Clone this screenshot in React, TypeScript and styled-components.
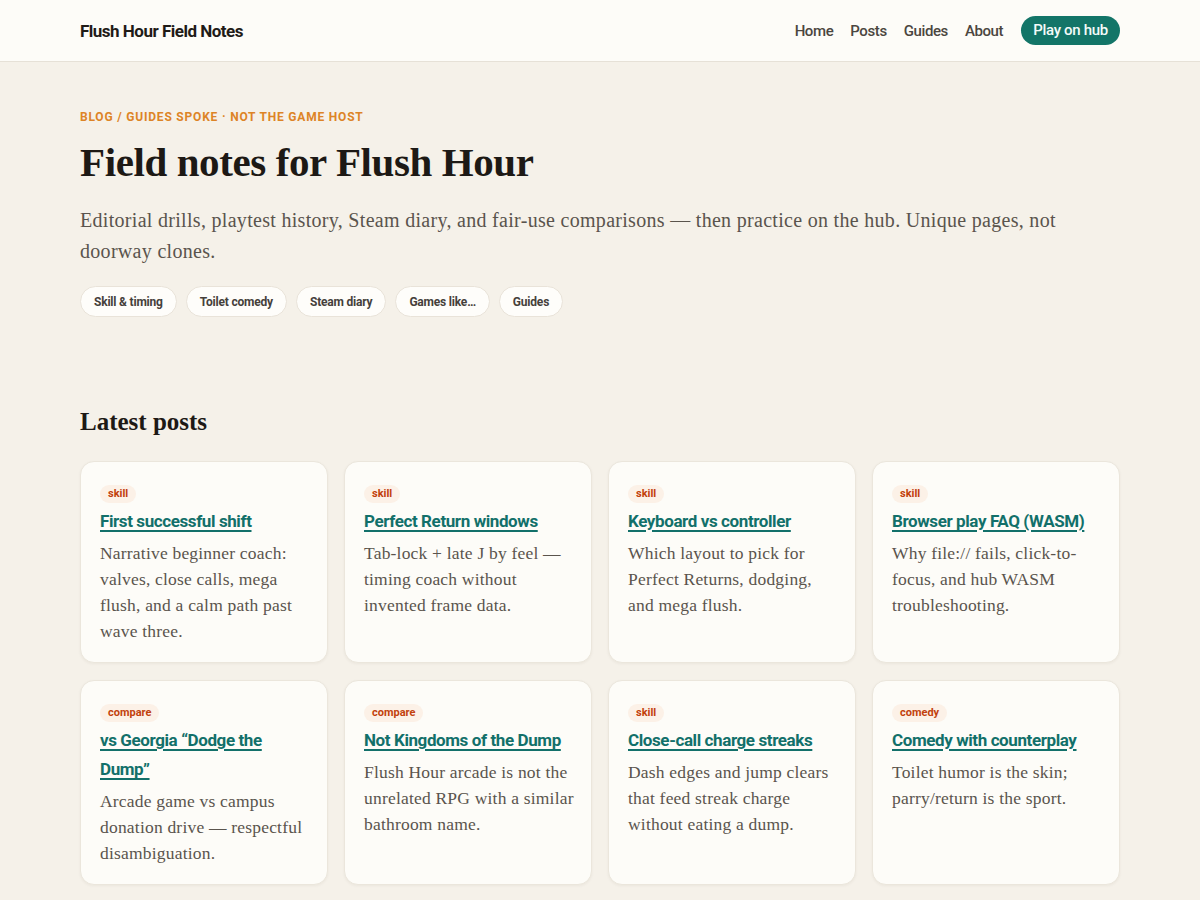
import React from 'react';
import styled, { createGlobalStyle } from 'styled-components';

const sans = `"Roboto", "Liberation Sans", Arial, sans-serif`;
const serif = `"Liberation Serif", "DejaVu Serif", Georgia, serif`;

const GlobalStyle = createGlobalStyle`
  * { box-sizing: border-box; }
  html, body {
    margin: 0;
    padding: 0;
    background: #f5f1e9;
    color: #1f1b17;
    font-family: ${serif};
  }
`;

const Header = styled.header`
  background: #fdfcf8;
  border-bottom: 1px solid #e6e1d7;
  height: 62px;
`;

const HeaderInner = styled.div`
  max-width: 1040px;
  height: 100%;
  margin: 0 auto;
  display: flex;
  align-items: center;
  justify-content: space-between;
`;

const Brand = styled.a`
  font-family: ${sans};
  font-weight: 700;
  font-size: 17px;
  letter-spacing: -0.5px;
  color: #1f1b17;
  text-decoration: none;
`;

const Nav = styled.nav`
  display: flex;
  align-items: center;
  gap: 17px;
`;

const NavLink = styled.a`
  font-family: ${sans};
  font-weight: 500;
  font-size: 15px;
  letter-spacing: -0.4px;
  color: #4b4640;
  text-decoration: none;
`;

const HubButton = styled.a`
  font-family: ${sans};
  font-weight: 500;
  font-size: 15px;
  letter-spacing: -0.3px;
  color: #f4fbf9;
  background: #137568;
  text-decoration: none;
  border-radius: 999px;
  padding: 5px 12px 6px;
  margin-left: 1px;
  margin-top: -1px;
`;

const Main = styled.main`
  max-width: 1040px;
  margin: 0 auto;
`;

const Hero = styled.section`
  padding-top: 47px;
  padding-bottom: 89px;
`;

const Eyebrow = styled.p`
  margin: 0;
  font-family: ${sans};
  font-weight: 700;
  font-size: 12px;
  letter-spacing: 0.8px;
  text-transform: uppercase;
  color: #dd8426;
  line-height: 16px;
`;

const Title = styled.h1`
  margin: 12px 0 0;
  font-family: ${serif};
  font-weight: 700;
  font-size: 41px;
  line-height: 50px;
  letter-spacing: -0.4px;
  color: #1d1915;
`;

const Lede = styled.p`
  margin: 18px 0 0;
  max-width: 1000px;
  font-family: ${serif};
  font-size: 20px;
  line-height: 31px;
  letter-spacing: 0.3px;
  color: #5a544d;
`;

const Chips = styled.div`
  display: flex;
  flex-wrap: wrap;
  gap: 9px;
  margin-top: 19px;
`;

const Chip = styled.a`
  font-family: ${sans};
  font-weight: 700;
  font-size: 12px;
  letter-spacing: -0.2px;
  color: #45403a;
  background: #fefdfa;
  border: 1px solid #e9e3d9;
  border-radius: 999px;
  padding: 0 13px;
  height: 31px;
  display: inline-flex;
  align-items: center;
  text-decoration: none;
`;

const SectionTitle = styled.h2`
  margin: 0;
  font-family: ${serif};
  font-weight: 700;
  font-size: 25px;
  line-height: 32px;
  color: #1d1915;
`;

const Grid = styled.div`
  display: grid;
  grid-template-columns: repeat(4, 1fr);
  gap: 17px 16px;
  margin-top: 23px;
  padding-bottom: 40px;
`;

const Card = styled.article`
  background: #fdfcf8;
  border: 1px solid #ebe6dc;
  border-radius: 14px;
  box-shadow: 0 1px 3px rgba(60, 45, 20, 0.05);
  padding: 23px 16px 18px 19px;
  min-height: 202px;
`;

const Tag = styled.span`
  display: block;
  width: fit-content;
  font-family: ${sans};
  font-weight: 700;
  font-size: 11px;
  line-height: 18px;
  color: #c2410c;
  background: #fcf1e7;
  border-radius: 999px;
  padding: 0 8px;
`;

const CardTitle = styled.a`
  display: block;
  margin-top: 4px;
  font-family: ${sans};
  font-weight: 700;
  font-size: 17px;
  line-height: 29px;
  letter-spacing: -0.4px;
  color: #12706a;
  text-decoration: underline;
  text-underline-offset: 3px;
  text-decoration-thickness: 1.5px;
`;

const CardText = styled.p`
  margin: 4px 0 0;
  font-family: ${serif};
  font-size: 17.5px;
  line-height: 26px;
  letter-spacing: 0.2px;
  color: #5a544d;
`;

const posts = [
  { tag: 'skill', title: 'First successful shift', text: 'Narrative beginner coach: valves, close calls, mega flush, and a calm path past wave three.' },
  { tag: 'skill', title: 'Perfect Return windows', text: 'Tab-lock + late J by feel — timing coach without invented frame data.' },
  { tag: 'skill', title: 'Keyboard vs controller', text: 'Which layout to pick for Perfect Returns, dodging, and mega flush.' },
  { tag: 'skill', title: 'Browser play FAQ (WASM)', text: 'Why file:// fails, click-to-focus, and hub WASM troubleshooting.' },
  { tag: 'compare', title: 'vs Georgia “Dodge the Dump”', text: 'Arcade game vs campus donation drive — respectful disambiguation.' },
  { tag: 'compare', title: 'Not Kingdoms of the Dump', text: 'Flush Hour arcade is not the unrelated RPG with a similar bathroom name.' },
  { tag: 'skill', title: 'Close-call charge streaks', text: 'Dash edges and jump clears that feed streak charge without eating a dump.' },
  { tag: 'comedy', title: 'Comedy with counterplay', text: 'Toilet humor is the skin; parry/return is the sport.' },
];

const chips = ['Skill & timing', 'Toilet comedy', 'Steam diary', 'Games like…', 'Guides'];

export default function App() {
  return (
    <>
      <GlobalStyle />
      <Header>
        <HeaderInner>
          <Brand href="#">Flush Hour Field Notes</Brand>
          <Nav>
            <NavLink href="#">Home</NavLink>
            <NavLink href="#">Posts</NavLink>
            <NavLink href="#">Guides</NavLink>
            <NavLink href="#">About</NavLink>
            <HubButton href="#">Play on hub</HubButton>
          </Nav>
        </HeaderInner>
      </Header>
      <Main>
        <Hero>
          <Eyebrow>Blog / guides spoke · not the game host</Eyebrow>
          <Title>Field notes for Flush Hour</Title>
          <Lede>
            Editorial drills, playtest history, Steam diary, and fair-use comparisons — then practice on the hub. Unique pages, not doorway clones.
          </Lede>
          <Chips>
            {chips.map((c) => (
              <Chip key={c} href="#">{c}</Chip>
            ))}
          </Chips>
        </Hero>
        <section>
          <SectionTitle>Latest posts</SectionTitle>
          <Grid>
            {posts.map((p) => (
              <Card key={p.title}>
                <Tag>{p.tag}</Tag>
                <CardTitle href="#">{p.title}</CardTitle>
                <CardText>{p.text}</CardText>
              </Card>
            ))}
          </Grid>
        </section>
      </Main>
    </>
  );
}
